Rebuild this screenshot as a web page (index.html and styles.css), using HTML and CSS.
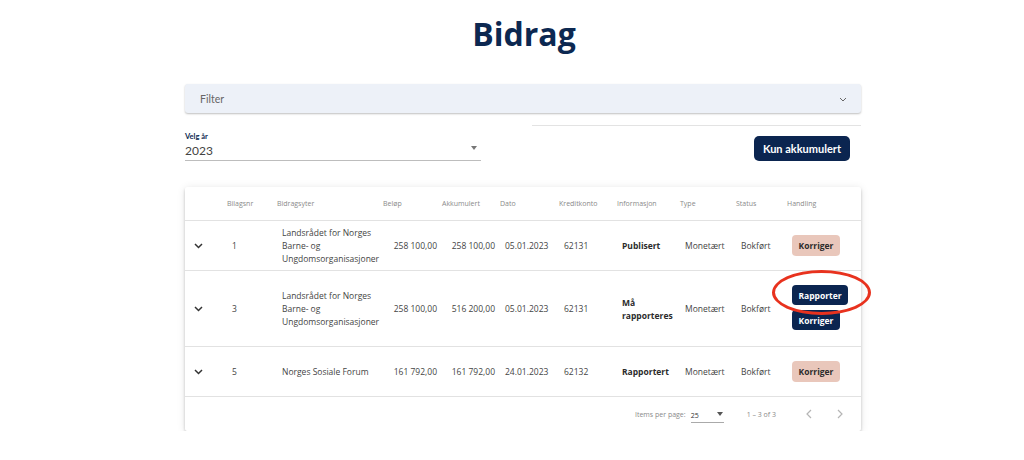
FILE: index.html
```html
<!DOCTYPE html>
<html lang="no">
<head>
<meta charset="utf-8">
<title>Bidrag</title>
<link rel="stylesheet" href="styles.css">
</head>
<body>
<main class="page">
  <h1 class="title">Bidrag</h1>

  <div class="filter">
    <span class="filter-label">Filter</span>
    <svg class="filter-chev" width="8" height="5" viewBox="0 0 8 5"><path d="M1 1l3 3 3-3" fill="none" stroke="#666" stroke-width="1"/></svg>
  </div>

  <div class="controls">
    <div class="year">
      <div class="year-label">Velg år</div>
      <div class="year-field">
        <span class="year-value">2023</span>
        <span class="tri"></span>
      </div>
    </div>
    <div class="right">
      <div class="right-line"></div>
      <div class="right-btn"><button class="btn navy big">Kun akkumulert</button></div>
    </div>
  </div>

  <section class="card">
    <div class="row head">
      <div class="c"></div>
      <div class="c">Bilagsnr</div>
      <div class="c">Bidragsyter</div>
      <div class="c">Beløp</div>
      <div class="c">Akkumulert</div>
      <div class="c">Dato</div>
      <div class="c">Kreditkonto</div>
      <div class="c">Informasjon</div>
      <div class="c">Type</div>
      <div class="c">Status</div>
      <div class="c">Handling</div>
    </div>

    <div class="row body r1">
      <div class="c chev"><svg width="9" height="6" viewBox="0 0 9 6"><path d="M1 1l3.5 3.5L8 1" fill="none" stroke="#333" stroke-width="1.5"/></svg></div>
      <div class="c">1</div>
      <div class="c name">Landsrådet for Norges<br>Barne- og<br>Ungdomsorganisasjoner</div>
      <div class="c num">258 100,00</div>
      <div class="c num">258 100,00</div>
      <div class="c">05.01.2023</div>
      <div class="c">62131</div>
      <div class="c strong">Publisert</div>
      <div class="c">Monetært</div>
      <div class="c">Bokført</div>
      <div class="c"><button class="btn salmon">Korriger</button></div>
    </div>

    <div class="row body r2">
      <div class="c chev"><svg width="9" height="6" viewBox="0 0 9 6"><path d="M1 1l3.5 3.5L8 1" fill="none" stroke="#333" stroke-width="1.5"/></svg></div>
      <div class="c">3</div>
      <div class="c name">Landsrådet for Norges<br>Barne- og<br>Ungdomsorganisasjoner</div>
      <div class="c num">258 100,00</div>
      <div class="c num">516 200,00</div>
      <div class="c">05.01.2023</div>
      <div class="c">62131</div>
      <div class="c strong">Må<br>rapporteres</div>
      <div class="c">Monetært</div>
      <div class="c">Bokført</div>
      <div class="c actions">
        <button class="btn navy">Rapporter</button>
        <button class="btn navy">Korriger</button>
        <span class="ring"></span>
      </div>
    </div>

    <div class="row body r3">
      <div class="c chev"><svg width="9" height="6" viewBox="0 0 9 6"><path d="M1 1l3.5 3.5L8 1" fill="none" stroke="#333" stroke-width="1.5"/></svg></div>
      <div class="c">5</div>
      <div class="c name">Norges Sosiale Forum</div>
      <div class="c num">161 792,00</div>
      <div class="c num">161 792,00</div>
      <div class="c">24.01.2023</div>
      <div class="c">62132</div>
      <div class="c strong">Rapportert</div>
      <div class="c">Monetært</div>
      <div class="c">Bokført</div>
      <div class="c"><button class="btn salmon">Korriger</button></div>
    </div>

    <div class="paginator">
      <span class="ipp">Items per page:</span>
      <span class="psel"><span>25</span><span class="tri small"></span></span>
      <span class="range">1 – 3 of 3</span>
      <span class="nav">
        <svg width="6" height="10" viewBox="0 0 6 10"><path d="M5 1L1 5l4 4" fill="none" stroke="#b5b5b5" stroke-width="1.2"/></svg>
        <svg width="6" height="10" viewBox="0 0 6 10"><path d="M1 1l4 4-4 4" fill="none" stroke="#b5b5b5" stroke-width="1.2"/></svg>
      </span>
    </div>
  </section>
</main>
</body>
</html>
```

FILE: styles.css
```css
* { box-sizing: border-box; }
html, body { margin: 0; padding: 0; background: #fff; }
body { font-family: "Open Sans", "Liberation Sans", sans-serif; color: #333; }

.page { width: 676px; margin-left: 185px; padding-top: 9px; }

.title {
  margin: 0;
  text-align: center;
  font-size: 32px;
  line-height: 50px;
  font-weight: 700;
  color: #0c2851;
  transform: translateX(1px);
}

.filter {
  margin-top: 25px;
  height: 29px;
  background: #edf1f8;
  border-radius: 3px;
  box-shadow: 0 1px 2px rgba(0,0,0,.25);
  display: flex;
  align-items: center;
  justify-content: space-between;
  padding: 0 14px 0 15px;
}
.filter-label { font-family: "Lato", sans-serif; font-size: 10.5px; color: #666; }
.filter-chev { margin-top: 2px; }

.controls { display: flex; justify-content: space-between; margin-top: 12px; }
.year { width: 296px; padding-top: 7px; }
.year-label { font-family: "Lato", sans-serif; font-weight: 700; font-size: 7.5px; color: #0c2851; line-height: 10px; }
.year-field {
  display: flex; justify-content: space-between; align-items: center;
  border-bottom: 1px solid #bdbdbd;
  height: 19px;
  padding-right: 4px;
}
.year-value { font-family: "Lato", sans-serif; font-size: 12px; color: #444; margin-top: -1px; }
.tri { width: 0; height: 0; border-left: 3.5px solid transparent; border-right: 3.5px solid transparent; border-top: 4px solid #777; margin-top: -7px; }

.right { width: 329px; }
.right-line { height: 1px; background: #e3e3e3; }
.right-btn { display: flex; justify-content: flex-end; padding-right: 11px; margin-top: 10px; }

.btn {
  border: 0;
  border-radius: 4px;
  font-family: "Open Sans", sans-serif;
  font-weight: 700;
  font-size: 8.5px;
  height: 20px;
  padding: 0 6px;
  cursor: pointer;
}
.btn.big { font-family: "Lato", sans-serif; font-size: 11px; height: 25px; padding: 0 9px; border-radius: 5px; margin-left: -2px; }
.navy { background: #0b2550; color: #fff; }
.salmon { background: #e9c7bb; color: #2b2b2b; width: 48px; height: 21px; }

.card {
  margin-top: 26px;
  background: #fff;
  border-radius: 2px;
  box-shadow: 0 2px 3px rgba(0,0,0,.2), 0 1px 8px rgba(0,0,0,.1);
}

.row {
  display: grid;
  grid-template-columns: 39px 50px 106px 59px 58px 59px 58px 63px 56px 51px 77px;
  align-items: center;
  border-bottom: 1px solid #e2e2e2;
}
.head { height: 34px; font-size: 7px; color: #8a8a8a; }
.head .c { padding-left: 3px; padding-bottom: 1px; }
.body { font-size: 8.5px; line-height: 13px; color: #444; }
.body .c { padding-left: 8px; }
.body .num { text-align: right; padding-left: 0; padding-right: 2px; }
.body .chev { padding-left: 9px; display: flex; }
.body .strong { font-weight: 700; color: #2b2b2b; }
.r1 { height: 50px; }
.r2 { height: 76px; }
.r3 { height: 50px; }

.actions { position: relative; display: flex; flex-direction: column; align-items: flex-start; gap: 5px; padding-bottom: 2px; }
.actions .btn { height: 20px; }
.actions .btn:first-child { width: 56px; }
.actions .btn:nth-child(2) { width: 48px; }
.ring {
  position: absolute;
  left: -12px; top: -15px;
  width: 99px; height: 45px;
  border: 3px solid #e8321e;
  border-radius: 50%;
  pointer-events: none;
}

.paginator {
  height: 34px;
  display: flex;
  align-items: center;
  justify-content: flex-end;
  font-size: 7px;
  color: #8a8a8a;
  padding-right: 18px;
}
.ipp { margin-right: 5px; }
.psel {
  display: flex; justify-content: space-between; align-items: center;
  width: 33px; height: 14px;
  border-bottom: 1px solid #aaa;
  color: #333;
  margin-top: 3px;
  padding-right: 1px;
}
.tri.small { margin-top: -2px; border-top-color: #555; }
.range { margin-left: 23px; }
.nav { display: flex; gap: 25px; margin-left: 30px; }
```
